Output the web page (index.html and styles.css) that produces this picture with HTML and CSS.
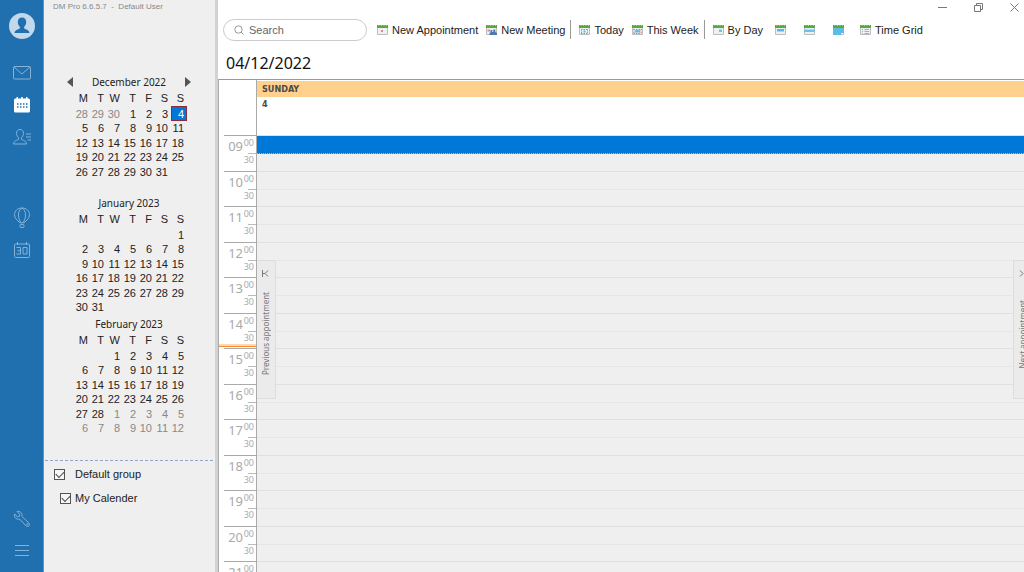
FILE: index.html
```html
<!DOCTYPE html>
<html lang="en">
<head>
<meta charset="utf-8">
<title>DM Pro - Calendar</title>
<link rel="stylesheet" href="styles.css">
</head>
<body>
<div class="app">
  <nav class="rail" aria-label="Modules">
    <button class="rail-btn avatar" aria-label="Profile"><svg width="26" height="26" viewBox="0 0 26 26"><circle cx="13" cy="13" r="13" fill="#c3d8ea"/><path d="M13 4.500c-2.700 0-4.200 2-4.200 4.600 0 2 .8 3.600 2 4.700v1.700c-1 .8-4.800 1.200-5.300 4.400h15c-.5-3.200-4.300-3.600-5.300-4.400v-1.700c1.200-1.100 2-2.700 2-4.700 0-2.600-1.500-4.600-4.200-4.600z" fill="#2070b0"/></svg></button>
    <button class="rail-btn" aria-label="Mail"><svg width="20" height="16" viewBox="0 0 20 16" fill="none" stroke="currentColor"><rect x="1.500" y="1.500" width="17" height="12.500" rx="1"/><path d="M2 2l8 7 8-7"/></svg></button>
    <button class="rail-btn active" aria-label="Calendar"><svg width="18" height="16" viewBox="0 0 18 16"><path d="M2.500 1.500h1V0H5v1.500h3.200V0h1.600v1.500H13V0h1.500v1.500h1A1.500 1.500 0 0 1 17 3v11a1.500 1.500 0 0 1-1.500 1.500h-13A1.500 1.500 0 0 1 1 14V3a1.500 1.500 0 0 1 1.500-1.500z" fill="#fff"/><path d="M4 7h1.500M7 7h1.500M10 7h1.500M13 7h1.500M4 10h1.500M7 10h1.500M10 10h1.500M13 10h1.500" stroke="#2070b0" stroke-width="1.400"/></svg></button>
    <button class="rail-btn" aria-label="Contacts"><svg width="20" height="18" viewBox="0 0 20 18" fill="none" stroke="currentColor"><path d="M8 1.500C5.700 1.500 4.500 3 4.500 5.300c0 1.900.8 3.300 2 4.300v1.800c-1 .9-4.500.9-5 4.600h13c-.5-3.700-4-3.700-5-4.600V9.600c1.200-1 2-2.400 2-4.300C11.500 3 10.300 1.500 8 1.500zM14 6h5M14 9h5M15.500 12H19"/></svg></button>
    <button class="rail-btn balloon" aria-label="Travel"><svg width="18" height="22" viewBox="0 0 18 22" fill="none" stroke="currentColor"><path d="M9 1C4.500 1 1.500 4 1.500 7.800c0 3.600 3 5.700 5.500 8h4c2.500-2.300 5.500-4.400 5.500-8C16.500 4 13.500 1 9 1zM9 1C6.500 2.500 5.500 5 5.500 8s1 5.500 2.500 7.800M9 1c2.500 1.500 3.500 4 3.500 7s-1 5.500-2.500 7.800"/><rect x="7" y="17.500" width="4" height="3" rx="1"/></svg></button>
    <button class="rail-btn" aria-label="Date"><svg width="18" height="17" viewBox="0 0 18 17" fill="none" stroke="currentColor"><rect x="1.500" y="2" width="15" height="13.500" rx="1"/><path d="M4.500 0v3M13.500 0v3M3.500 5.500h4v6.500h-4M4.500 8.700h3M10 5.500h4V12h-4z"/></svg></button>
    <button class="rail-btn bottom" aria-label="Settings"><svg width="18" height="18" viewBox="0 0 18 18" fill="none" stroke="currentColor"><path d="M4 1.500l2.800 2.800-.4 2-2 .4L1.600 4C.6 7 3.200 9.800 6.500 9l6.700 7c2 1.500 4.300-.8 2.900-2.800L9 6.500C9.700 3.200 7 .6 4 1.500z"/><circle cx="14.300" cy="14.300" r=".6"/></svg></button>
    <button class="rail-btn" aria-label="Menu"><svg width="14" height="12" viewBox="0 0 14 12" fill="none" stroke="currentColor"><path d="M0 .5h14M0 5.500h14M0 10.500h14"/></svg></button>
  </nav>

  <aside class="side">
    <div class="app-title">DM Pro 6.6.5.7 &nbsp;-&nbsp; Default User</div>
    <div class="months">
      <section class="month">
        <div class="month-title"><button aria-label="Previous month"><svg width="6" height="10"><path d="M6 0v10L0 5z" fill="#555"/></svg></button><span>December 2022</span><button aria-label="Next month"><svg width="6" height="10"><path d="M0 0v10l6-5z" fill="#555"/></svg></button></div>
        <table>
          <thead><tr><th>M</th><th>T</th><th>W</th><th>T</th><th>F</th><th>S</th><th>S</th></tr></thead>
          <tbody>
            <tr><td class="dim">28</td><td class="dim">29</td><td class="dim">30</td><td>1</td><td>2</td><td>3</td><td class="today">4</td></tr>
            <tr><td>5</td><td>6</td><td>7</td><td>8</td><td>9</td><td>10</td><td>11</td></tr>
            <tr><td>12</td><td>13</td><td>14</td><td>15</td><td>16</td><td>17</td><td>18</td></tr>
            <tr><td>19</td><td>20</td><td>21</td><td>22</td><td>23</td><td>24</td><td>25</td></tr>
            <tr><td>26</td><td>27</td><td>28</td><td>29</td><td>30</td><td>31</td><td></td></tr>
          </tbody>
        </table>
      </section>
      <section class="month">
        <div class="month-title"><span>January 2023</span></div>
        <table>
          <thead><tr><th>M</th><th>T</th><th>W</th><th>T</th><th>F</th><th>S</th><th>S</th></tr></thead>
          <tbody>
            <tr><td></td><td></td><td></td><td></td><td></td><td></td><td>1</td></tr>
            <tr><td>2</td><td>3</td><td>4</td><td>5</td><td>6</td><td>7</td><td>8</td></tr>
            <tr><td>9</td><td>10</td><td>11</td><td>12</td><td>13</td><td>14</td><td>15</td></tr>
            <tr><td>16</td><td>17</td><td>18</td><td>19</td><td>20</td><td>21</td><td>22</td></tr>
            <tr><td>23</td><td>24</td><td>25</td><td>26</td><td>27</td><td>28</td><td>29</td></tr>
            <tr><td>30</td><td>31</td><td></td><td></td><td></td><td></td><td></td></tr>
          </tbody>
        </table>
      </section>
      <section class="month">
        <div class="month-title"><span>February 2023</span></div>
        <table>
          <thead><tr><th>M</th><th>T</th><th>W</th><th>T</th><th>F</th><th>S</th><th>S</th></tr></thead>
          <tbody>
            <tr><td></td><td></td><td>1</td><td>2</td><td>3</td><td>4</td><td>5</td></tr>
            <tr><td>6</td><td>7</td><td>8</td><td>9</td><td>10</td><td>11</td><td>12</td></tr>
            <tr><td>13</td><td>14</td><td>15</td><td>16</td><td>17</td><td>18</td><td>19</td></tr>
            <tr><td>20</td><td>21</td><td>22</td><td>23</td><td>24</td><td>25</td><td>26</td></tr>
            <tr><td>27</td><td>28</td><td class="dim">1</td><td class="dim">2</td><td class="dim">3</td><td class="dim">4</td><td class="dim">5</td></tr>
            <tr class="dim"><td>6</td><td>7</td><td>8</td><td>9</td><td>10</td><td>11</td><td>12</td></tr>
          </tbody>
        </table>
      </section>
    </div>
    <div class="groups">
      <label class="group"><input type="checkbox" checked><span>Default group</span></label>
      <label class="group nested"><input type="checkbox" checked><span>My Calender</span></label>
    </div>
  </aside>

  <main class="main">
    <div class="window-bar">
      <button aria-label="Minimize"><svg width="9" height="9" fill="none" stroke="#777"><path d="M0 4.500h9"/></svg></button>
      <button aria-label="Restore"><svg width="9" height="9" fill="none" stroke="#777"><path d="M.5 2.500h6v6h-6zM2.500 2.500v-2h6v6h-2"/></svg></button>
      <button aria-label="Close"><svg width="9" height="9" fill="none" stroke="#777"><path d="M.5.5l8 8M8.500.5l-8 8"/></svg></button>
    </div>
    <div class="toolbar">
      <label class="search"><svg width="10" height="10" fill="none" stroke="#999"><circle cx="4.500" cy="4.500" r="3.700"/><path d="M7 7l2.500 2.500"/></svg><input type="text" placeholder="Search" aria-label="Search"></label>
      <button class="tool first"><svg class="ico" viewBox="0 0 11 10"><use href="#cal"/><path d="M4 5h2v2H4z" fill="#ee8686"/></svg>New Appointment</button>
      <button class="tool"><svg class="ico" viewBox="0 0 11 10"><use href="#cal"/><path d="M1.500 4.500h2.500v2H1.500z" fill="#ee8686"/><path d="M3.500 10V8l1-.8V5h1.800v2h1V4.500H9.300V7l1.700 1v2z" fill="#4e77b5"/></svg>New Meeting</button>
      <span class="sep"></span>
      <button class="tool"><svg class="ico" viewBox="0 0 11 10"><use href="#cal"/><path d="M2 4.500h7M2 8.500h7M2.500 4v5M8.500 4v5" stroke="#ee7777" stroke-dasharray="1.500 1"/><path d="M4.500 5.500h2v2h-2z" fill="#5bb9e8"/></svg>Today</button>
      <button class="tool"><svg class="ico" viewBox="0 0 11 10"><use href="#cal"/><path d="M1.500 4.500h8M1.500 8.500h8M2 4v5M9 4v5" stroke="#ee7777" stroke-dasharray="1.500 1"/><path d="M3 5.200h5v2.300H3z" fill="#5bb9e8"/></svg>This Week</button>
      <span class="sep"></span>
      <button class="tool"><svg class="ico" viewBox="0 0 11 10"><use href="#cal"/><path d="M6 4.500h3v2.500H6z" fill="#6fc3ea"/></svg>By Day</button>
      <button class="tool view" aria-label="Work week"><svg class="ico" viewBox="0 0 11 10"><use href="#cal"/><path d="M2 4h7v2.500H2z" fill="#55b8e6"/></svg></button>
      <button class="tool view" aria-label="Week"><svg class="ico" viewBox="0 0 11 10"><use href="#cal"/><path d="M0 4.500h11v2.500H0z" fill="#6bc2ea"/></svg></button>
      <button class="tool view" aria-label="Month"><svg class="ico" viewBox="0 0 11 10"><use href="#cal"/><path d="M0 3h11v5H8v2H0z" fill="#5bbce8"/></svg></button>
      <button class="tool grid"><svg class="ico" viewBox="0 0 11 10"><use href="#cal"/><path d="M2 4.500h1M2 6.500h1M2 8.500h1M4.500 4.500H9M4.500 6.500H9M4.500 8.500H9" stroke="#74bee3"/></svg>Time Grid</button>
    </div>
    <h1 class="date">04/12/2022</h1>
    <section class="schedule">
      <div class="corner"></div>
      <header class="day"><div class="day-name">SUNDAY</div><div class="day-num">4</div></header>
      <div class="hours">
        <div class="hour"><b>09</b><i>00</i><i class="half">30</i></div>
        <div class="hour"><b>10</b><i>00</i><i class="half">30</i></div>
        <div class="hour"><b>11</b><i>00</i><i class="half">30</i></div>
        <div class="hour"><b>12</b><i>00</i><i class="half">30</i></div>
        <div class="hour"><b>13</b><i>00</i><i class="half">30</i></div>
        <div class="hour"><b>14</b><i>00</i><i class="half">30</i></div>
        <div class="hour"><b>15</b><i>00</i><i class="half">30</i></div>
        <div class="hour"><b>16</b><i>00</i><i class="half">30</i></div>
        <div class="hour"><b>17</b><i>00</i><i class="half">30</i></div>
        <div class="hour"><b>18</b><i>00</i><i class="half">30</i></div>
        <div class="hour"><b>19</b><i>00</i><i class="half">30</i></div>
        <div class="hour"><b>20</b><i>00</i><i class="half">30</i></div>
        <div class="hour"><b>21</b><i>00</i></div>
        <div class="now"></div>
      </div>
      <div class="slots">
        <div class="slot"><span class="selected"></span></div>
        <div class="slot"><span></span></div>
        <div class="slot"><span></span></div>
        <div class="slot"><span></span></div>
        <div class="slot"><span></span></div>
        <div class="slot"><span></span></div>
        <div class="slot"><span></span></div>
        <div class="slot"><span></span></div>
        <div class="slot"><span></span></div>
        <div class="slot"><span></span></div>
        <div class="slot"><span></span></div>
        <div class="slot"><span></span></div>
        <div class="slot"><span></span></div>
        <button class="jump prev"><svg width="7" height="7" fill="none" stroke="#777"><path d="M.5 0v7M6 .5l-3 3 3 3M3 3.500H1"/></svg><span>Previous appointment</span></button>
        <button class="jump next"><svg width="7" height="7" fill="none" stroke="#777"><path d="M1 .5l3 3-3 3M6.500 0v7"/></svg><span>Next appointment</span></button>
      </div>
    </section>
  </main>
</div>
<svg class="defs" width="0" height="0" aria-hidden="true"><defs><g id="cal"><path d="M.5 2.500h10v7H.5z" fill="#eef1f1" stroke="#b9bfbf"/><path d="M0 0h11v3H0z" fill="#55aa3c"/><path d="M2 0v1M4.500 0v1M7 0v1M9.500 0v1" stroke="#a9d89a"/></g></defs></svg>
</body>
</html>
```
FILE: styles.css
```css
* { box-sizing: border-box; }
body { margin: 0; font: 11px/14px "Liberation Sans", Arial, sans-serif; color: #222; background: #fff; }
button { border: 0; padding: 0; margin: 0; background: none; font: inherit; color: inherit; }
svg { display: block; flex: none; }
.defs { position: absolute; }
.app { display: flex; height: 100vh; overflow: hidden; }

.rail { flex: 0 0 44px; display: flex; flex-direction: column; background: #2070b0; border-right: 1px solid #5c98c8; padding: 10px 0 5px; }
.rail-btn { display: flex; align-items: center; justify-content: center; height: 32px; color: #83b3d9; }
.avatar { margin-bottom: 15px; }
.balloon { margin-top: 49px; }
.bottom { margin-top: auto; }

.side { flex: 0 0 174px; display: flex; flex-direction: column; background: #efefef; border-right: 3px solid #d2d2d5; }
.app-title { height: 74px; padding-left: 9px; font-size: 8px; line-height: 13px; color: #888; }
.months { height: 386px; padding-left: 23px; }
.month { width: 128px; height: 121px; }
.month-title { display: flex; align-items: center; justify-content: space-between; height: 16px; padding-right: 4px; font: 10px/16px "Noto Sans", sans-serif; }
.month-title span { flex: 1; text-align: center; }
table { border-collapse: collapse; table-layout: fixed; width: 112px; margin-left: 8px; }
th, td { padding: 0 3px 0 0; text-align: right; font-size: 11px; font-weight: 400; line-height: 14px; white-space: nowrap; }
thead tr { height: 16px; }
tbody tr { height: 15px; }
tbody tr:nth-child(even) { height: 14px; }
.dim { color: #888; }
.today { background: #0078d7; color: #fff; outline: 1px solid #8a2c3c; outline-offset: -1px; }
.groups { margin: 0 2px 0 1px; padding: 6px 9px; border-top: 1px dashed #8ca7cb; display: flex; flex-direction: column; gap: 10px; }
.group { display: flex; align-items: center; gap: 10px; }
.group.nested { padding-left: 6px; gap: 4px; }
.group input { appearance: none; width: 11px; height: 11px; margin: 0; border: 1px solid #555; background: #f6f6f6; display: grid; place-items: center; }
.group input:checked::before { content: ""; width: 7px; height: 4px; border: solid #444; border-width: 0 0 1px 1px; rotate: -45deg; translate: 0 -1px; }

.main { flex: 1; min-width: 0; display: flex; flex-direction: column; }
.window-bar { display: flex; justify-content: flex-end; gap: 27px; height: 18px; padding: 3px 5px 0 0; }
.window-bar button { height: 9px; }
.toolbar { display: flex; align-items: center; height: 23px; padding-left: 5px; white-space: nowrap; }
.search { display: flex; align-items: center; gap: 5px; width: 144px; height: 22px; padding: 0 10px; border: 1px solid #ccc; border-radius: 11px; }
.search input { flex: 1; min-width: 0; border: 0; padding: 0; outline: 0; background: none; font: inherit; }
.search input::placeholder { color: #666; opacity: 1; }
.tool { display: flex; align-items: center; gap: 4px; margin-right: 8px; }
.tool.first { margin-left: 10px; }
.tool.view { margin: 0 14px 0 4px; }
.tool.grid { margin-left: 2px; }
.tool:has(+ .sep) { margin-right: 5px; }
.ico { width: 11px; height: 10px; }
.sep { width: 1px; height: 19px; margin-right: 8px; background: #999; }
.date { margin: 0; height: 38px; padding: 0 8px; font: 400 16px/44px "Noto Sans", sans-serif; color: #111; }

.schedule { flex: 1; min-height: 0; display: grid; grid-template-columns: 38px 1fr; grid-template-rows: 55px 1fr; border-top: 1px solid #999; border-left: 1px solid #aaa; overflow: hidden; }
.corner { border-right: 1px solid #aaa; }
.day { padding-top: 1px; font: 700 9px/15px "DejaVu Sans Condensed", "DejaVu Sans", sans-serif; color: #4a4a4a; }
.day-name { background: #ffd18c; padding-left: 5px; line-height: 16px; }
.day-num { padding-left: 5px; }
.hours, .slots { position: relative; display: grid; grid-auto-rows: 36px 35px; align-content: start; min-height: 0; overflow: hidden; }
.hours { border-right: 1px solid #aaa; padding-left: 5px; }
.hour { display: grid; grid-template-columns: 19px minmax(0, 1fr); grid-template-rows: 17px 1fr; border-top: 1px solid #aaa; color: #aaa; font-family: "Noto Sans", sans-serif; text-align: right; }
.hour b { font-weight: 400; font-size: 13px; line-height: 20px; }
.hour i { font-style: normal; font-size: 9px; line-height: 13px; padding-right: 2px; }
.hour .half { grid-column: 2; background: linear-gradient(#bbb, #bbb) right top / 8px 1px no-repeat; }
.now { position: absolute; left: 0; right: 0; top: 209px; height: 3px; background: #ffd9b0; border-bottom: 1px solid #f78b32; }
.slots { background: #efefef; }
.slot { border-top: 1px solid #e0e0e0; }
.slot span { display: block; height: 18px; border-bottom: 1px dotted #ddd; }
.slot .selected { background: #0078d7; border-color: #8fc4ee; }
.jump { position: absolute; top: 125px; height: 139px; width: 19px; display: flex; flex-direction: column; align-items: center; padding-top: 9px; gap: 15px; background: #ebebeb; border: 1px solid #ddd; font: 8px/11px "Noto Sans", sans-serif; color: #777; }
.jump span { writing-mode: vertical-rl; rotate: 180deg; white-space: nowrap; }
.prev { left: 0; border-left: 0; padding-right: 2px; }
.next { right: -8px; }
.next span { margin-top: 8px; }
```
